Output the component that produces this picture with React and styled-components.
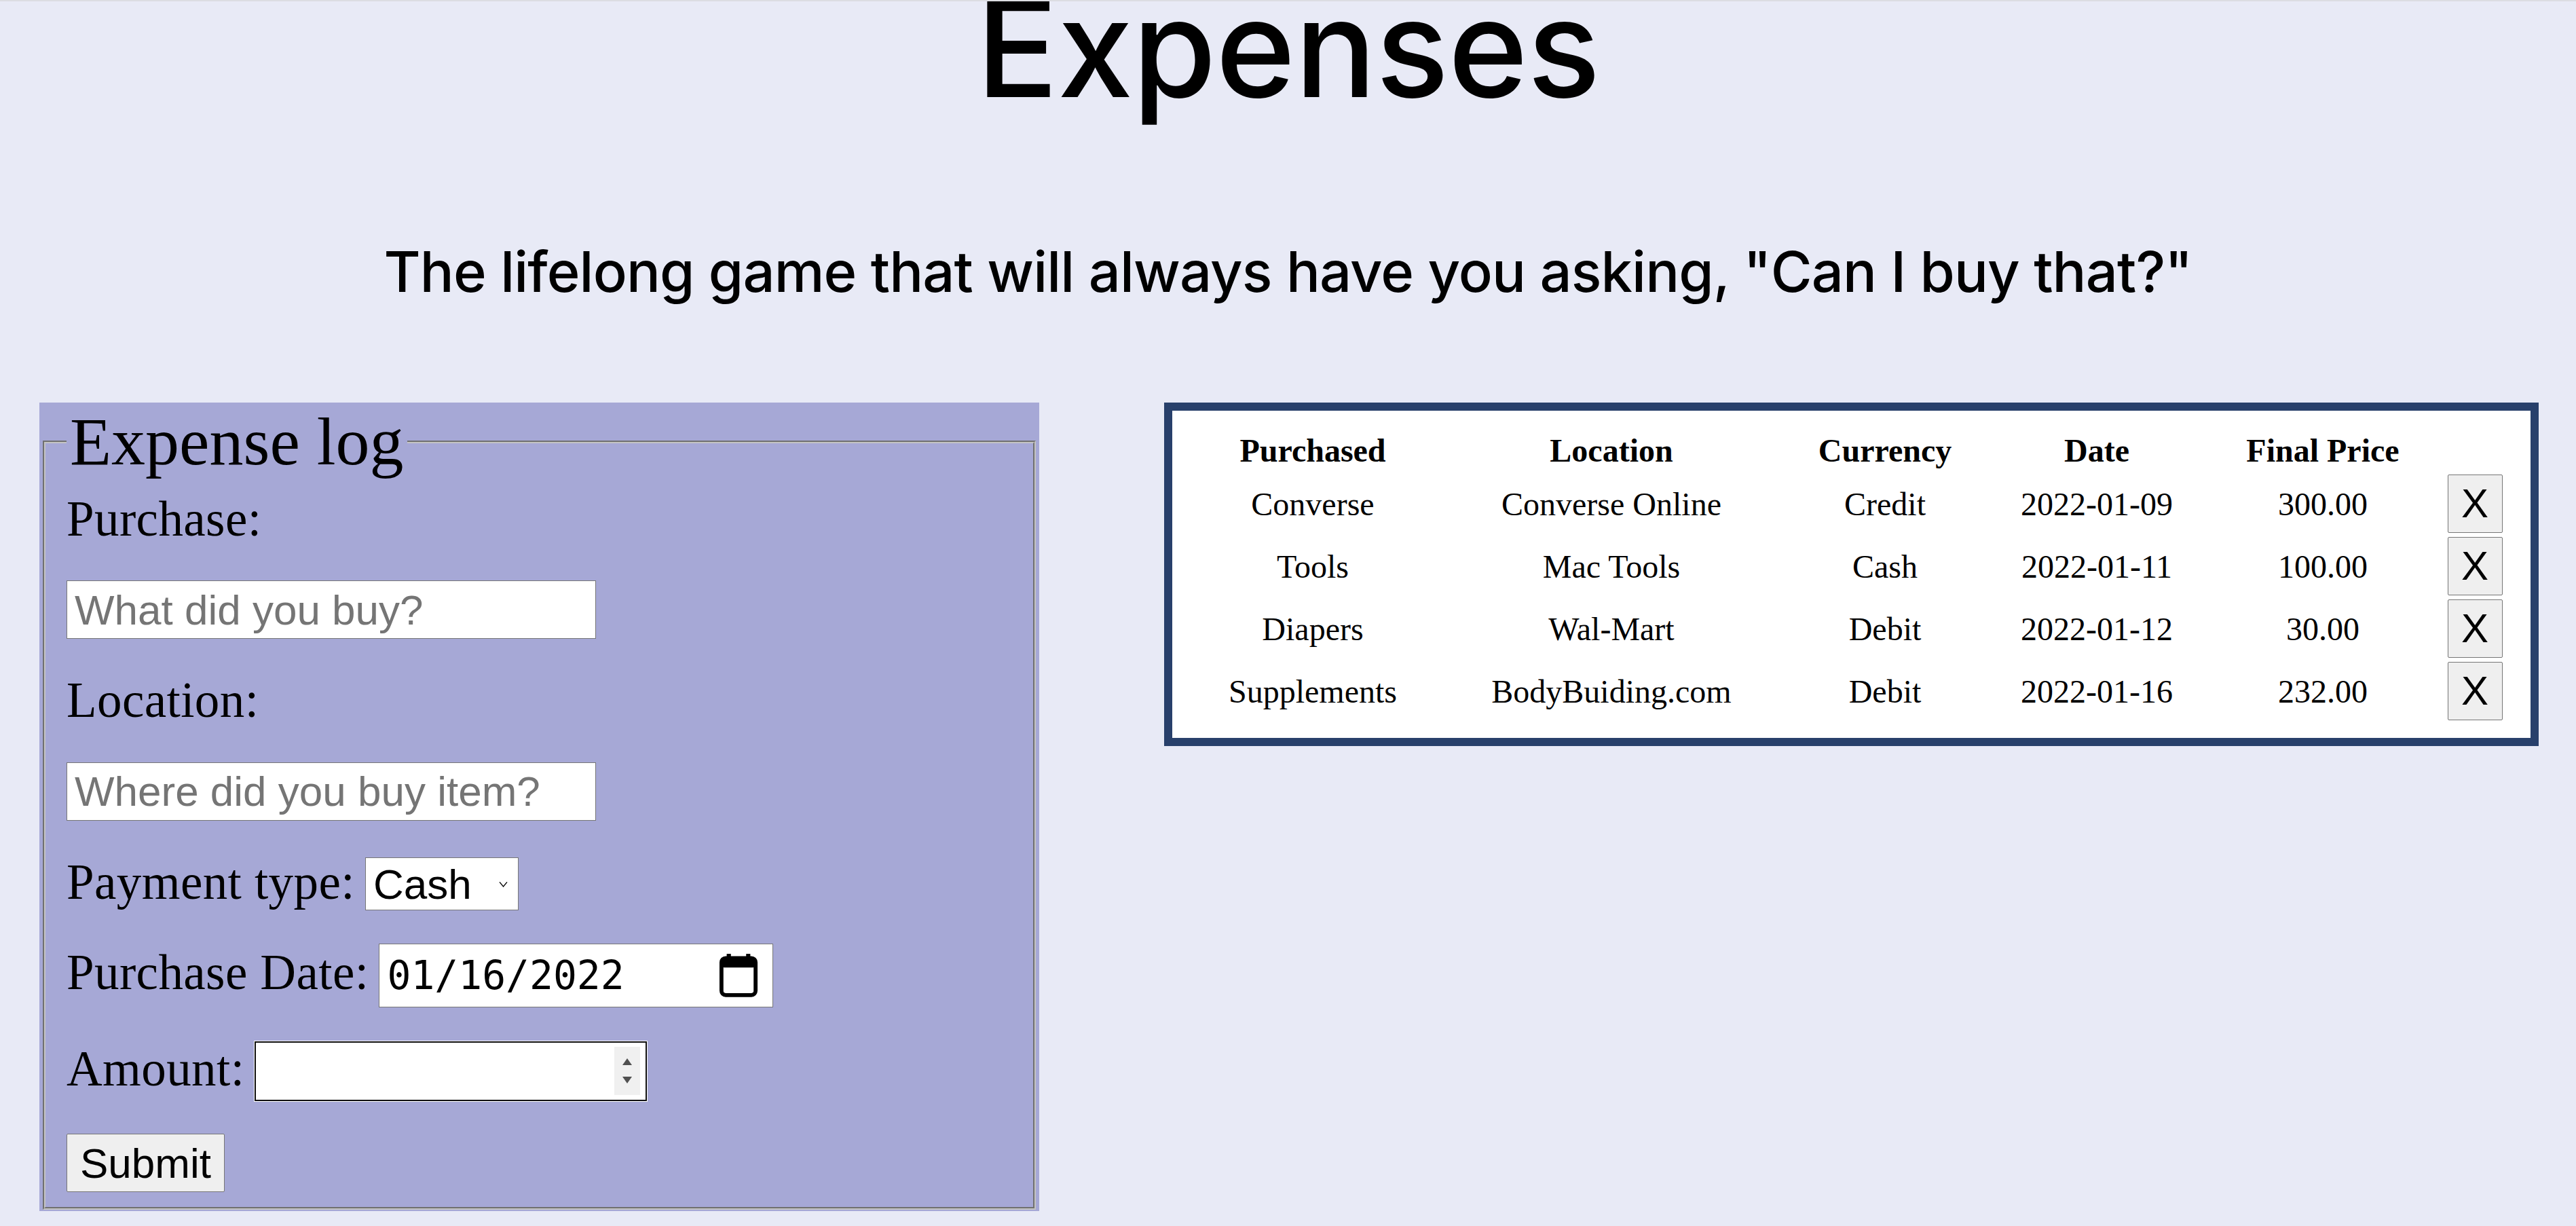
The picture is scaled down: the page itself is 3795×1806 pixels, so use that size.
import React from "react";
import styled, { createGlobalStyle } from "styled-components";

const GlobalStyle = createGlobalStyle`
  html, body { margin: 0; padding: 0; }
  body {
    background: #e8eaf6;
    font-family: "Liberation Serif", "Times New Roman", serif;
    color: #000;
  }
  * { box-sizing: border-box; }
`;

const Page = styled.div`
  min-height: 100vh;
  background: #e8eaf6;
  border-top: 2px solid #dcdde2;
`;

const Header = styled.header`
  overflow: hidden;
  text-align: center;
  font-family: Inter, "Noto Sans", sans-serif;
  font-weight: 500;
`;

const Title = styled.h1`
  margin: 0;
  font-size: 200px;
  line-height: 136px;
  font-weight: 500;
  letter-spacing: -1px;
`;

const Subtitle = styled.h3`
  margin: 211.5px 0 0;
  font-size: 83px;
  line-height: 100px;
  font-weight: 500;
  letter-spacing: -0.85px;
`;

const Main = styled.main`
  display: flex;
  justify-content: space-between;
  align-items: flex-start;
  padding: 0 55px 0 58px;
  margin-top: 143.5px;
`;

const FormPanel = styled.form`
  width: 1473px;
  background: #a6a8d6;
  padding: 0 5px 2px;
`;

const Fieldset = styled.fieldset`
  margin: 0;
  min-width: 0;
  border: 4px groove #c4c4c4;
  padding: 14.5px 31px 22px 31px;
`;

const Legend = styled.legend`
  font-family: "Liberation Serif", "Times New Roman", serif;
  font-size: 100px;
  line-height: 115px;
  padding: 0 5px;
`;

const Column = styled.div`
  display: flex;
  flex-direction: column;
  align-items: flex-start;
  gap: 48.75px;
`;

const Label = styled.label`
  font-family: "Liberation Serif", "Times New Roman", serif;
  font-size: 73px;
  line-height: 84px;
  letter-spacing: 0.4px;
  white-space: nowrap;
`;

const InlineRow = styled.div`
  display: flex;
  align-items: baseline;
  gap: 15px;
`;

const TextInput = styled.input`
  width: 780px;
  height: 86px;
  border: 1px solid #767676;
  border-radius: 0;
  background: #fff;
  padding: 0 11px;
  font-family: "Liberation Sans", Arial, sans-serif;
  font-size: 62px;
  color: #000;
  outline: none;
  &::placeholder { color: #757575; }
`;

const SelectWrap = styled.div`
  position: relative;
`;

const Select = styled.select`
  appearance: none;
  -webkit-appearance: none;
  width: 226px;
  height: 78px;
  border: 1px solid #767676;
  border-radius: 0;
  background: #fff;
  padding: 0 0 0 11px;
  font-family: "Liberation Sans", Arial, sans-serif;
  font-size: 62px;
  color: #000;
  outline: none;
`;

const Chevron = styled.svg`
  position: absolute;
  right: 16px;
  top: 50%;
  transform: translateY(-40%);
  pointer-events: none;
`;

const FieldBox = styled.div`
  display: flex;
  align-items: center;
  width: ${(p) => p.$w}px;
  height: ${(p) => p.$h}px;
  background: #fff;
  border: ${(p) => (p.$focused ? "2px solid #101010" : "1px solid #767676")};
  box-shadow: ${(p) => (p.$focused ? "0 0 0 1px #ffffff" : "none")};
  padding: ${(p) => p.$pad};
`;

const DateText = styled.input`
  flex: 1;
  min-width: 0;
  border: none;
  background: transparent;
  padding: 0;
  font-family: "DejaVu Sans Mono", "Liberation Mono", monospace;
  font-size: 58px;
  color: #000;
  outline: none;
`;

const NumberInput = styled.input`
  flex: 1;
  min-width: 0;
  border: none;
  background: transparent;
  padding: 0;
  font-family: "Liberation Sans", Arial, sans-serif;
  font-size: 62px;
  color: #000;
  outline: none;
  -moz-appearance: textfield;
  &::-webkit-inner-spin-button,
  &::-webkit-outer-spin-button { -webkit-appearance: none; margin: 0; }
`;

const Spinner = styled.div`
  width: 38px;
  height: 71px;
  background: #f0f0f0;
  display: flex;
  flex-direction: column;
  align-items: center;
  justify-content: space-around;
  padding: 8px 0;
`;

const SubmitButton = styled.button`
  width: 233px;
  height: 86px;
  padding: 0;
  background: #efefef;
  border: 1px solid #767676;
  border-radius: 2px;
  font-family: "Liberation Sans", Arial, sans-serif;
  font-size: 62px;
  color: #000;
`;

const TablePanel = styled.section`
  width: 2025px;
  background: #fff;
  border: 12px solid #28406b;
  padding: 28px 0 26px 16px;
`;

const Grid = styled.div`
  display: grid;
  grid-template-columns: 382px 498px 308px 316px 350px 98px;
  grid-template-rows: 60px repeat(4, 86px);
  row-gap: 6px;
  align-items: center;
  justify-items: center;
  font-family: "Liberation Serif", "Times New Roman", serif;
  font-size: 48px;
  line-height: 55px;
`;

const HeadCell = styled.div`
  font-weight: 700;
  white-space: nowrap;
`;

const Cell = styled.div`
  white-space: nowrap;
`;

const DeleteButton = styled.button`
  width: 81px;
  height: 86px;
  padding: 0;
  background: #efefef;
  border: 1px solid #767676;
  border-radius: 2px;
  font-family: "Liberation Sans", Arial, sans-serif;
  font-size: 60px;
  line-height: 1;
  color: #000;
`;

const CalendarIcon = () => (
  <svg width="58" height="64" viewBox="0 0 15 16.5" aria-hidden="true">
    <rect x="3" y="0" width="1.6" height="2.5" fill="#000" />
    <rect x="10.4" y="0" width="1.6" height="2.5" fill="#000" />
    <rect x="1" y="1.6" width="13" height="14.1" rx="1.6" fill="none" stroke="#000" strokeWidth="1.5" />
    <rect x="1" y="1.6" width="13" height="3.6" rx="1" fill="#000" />
  </svg>
);

const headers = ["Purchased", "Location", "Currency", "Date", "Final Price"];

const rows = [
  ["Converse", "Converse Online", "Credit", "2022-01-09", "300.00"],
  ["Tools", "Mac Tools", "Cash", "2022-01-11", "100.00"],
  ["Diapers", "Wal-Mart", "Debit", "2022-01-12", "30.00"],
  ["Supplements", "BodyBuiding.com", "Debit", "2022-01-16", "232.00"],
];

export default function App() {
  return (
    <>
      <GlobalStyle />
      <Page>
        <Header>
          <Title>Expenses</Title>
          <Subtitle>The lifelong game that will always have you asking, "Can I buy that?"</Subtitle>
        </Header>
        <Main>
          <FormPanel onSubmit={(e) => e.preventDefault()}>
            <Fieldset>
              <Legend>Expense log</Legend>
              <Column>
                <Label htmlFor="purchase">Purchase:</Label>
                <TextInput id="purchase" type="text" placeholder="What did you buy?" />
                <Label htmlFor="location">Location:</Label>
                <TextInput id="location" type="text" placeholder="Where did you buy item?" />
                <InlineRow>
                  <Label htmlFor="payment">Payment type:</Label>
                  <SelectWrap>
                    <Select id="payment" defaultValue="Cash">
                      <option>Cash</option>
                      <option>Credit</option>
                      <option>Debit</option>
                    </Select>
                    <Chevron width="13" height="9" viewBox="0 0 13 9">
                      <polyline points="1,1 6.5,7.5 12,1" fill="none" stroke="#000" strokeWidth="1.4" />
                    </Chevron>
                  </SelectWrap>
                </InlineRow>
                <InlineRow>
                  <Label htmlFor="date">Purchase Date:</Label>
                  <FieldBox $w={581} $h={94} $pad="0 21px 0 11px">
                    <DateText id="date" type="text" readOnly value="01/16/2022" />
                    <CalendarIcon />
                  </FieldBox>
                </InlineRow>
                <InlineRow>
                  <Label htmlFor="amount">Amount:</Label>
                  <FieldBox $w={578} $h={88} $pad="0 8px 0 11px" $focused>
                    <NumberInput id="amount" type="number" />
                    <Spinner>
                      <svg width="16" height="12" viewBox="0 0 16 12"><polygon points="8,1 15,11 1,11" fill="#505050" /></svg>
                      <svg width="16" height="12" viewBox="0 0 16 12"><polygon points="1,1 15,1 8,11" fill="#505050" /></svg>
                    </Spinner>
                  </FieldBox>
                </InlineRow>
                <SubmitButton type="submit">Submit</SubmitButton>
              </Column>
            </Fieldset>
          </FormPanel>
          <TablePanel>
            <Grid>
              {headers.map((h) => (
                <HeadCell key={h}>{h}</HeadCell>
              ))}
              <div />
              {rows.map((r) => (
                <React.Fragment key={r[0]}>
                  {r.map((c, i) => (
                    <Cell key={i}>{c}</Cell>
                  ))}
                  <DeleteButton type="button">X</DeleteButton>
                </React.Fragment>
              ))}
            </Grid>
          </TablePanel>
        </Main>
      </Page>
    </>
  );
}
